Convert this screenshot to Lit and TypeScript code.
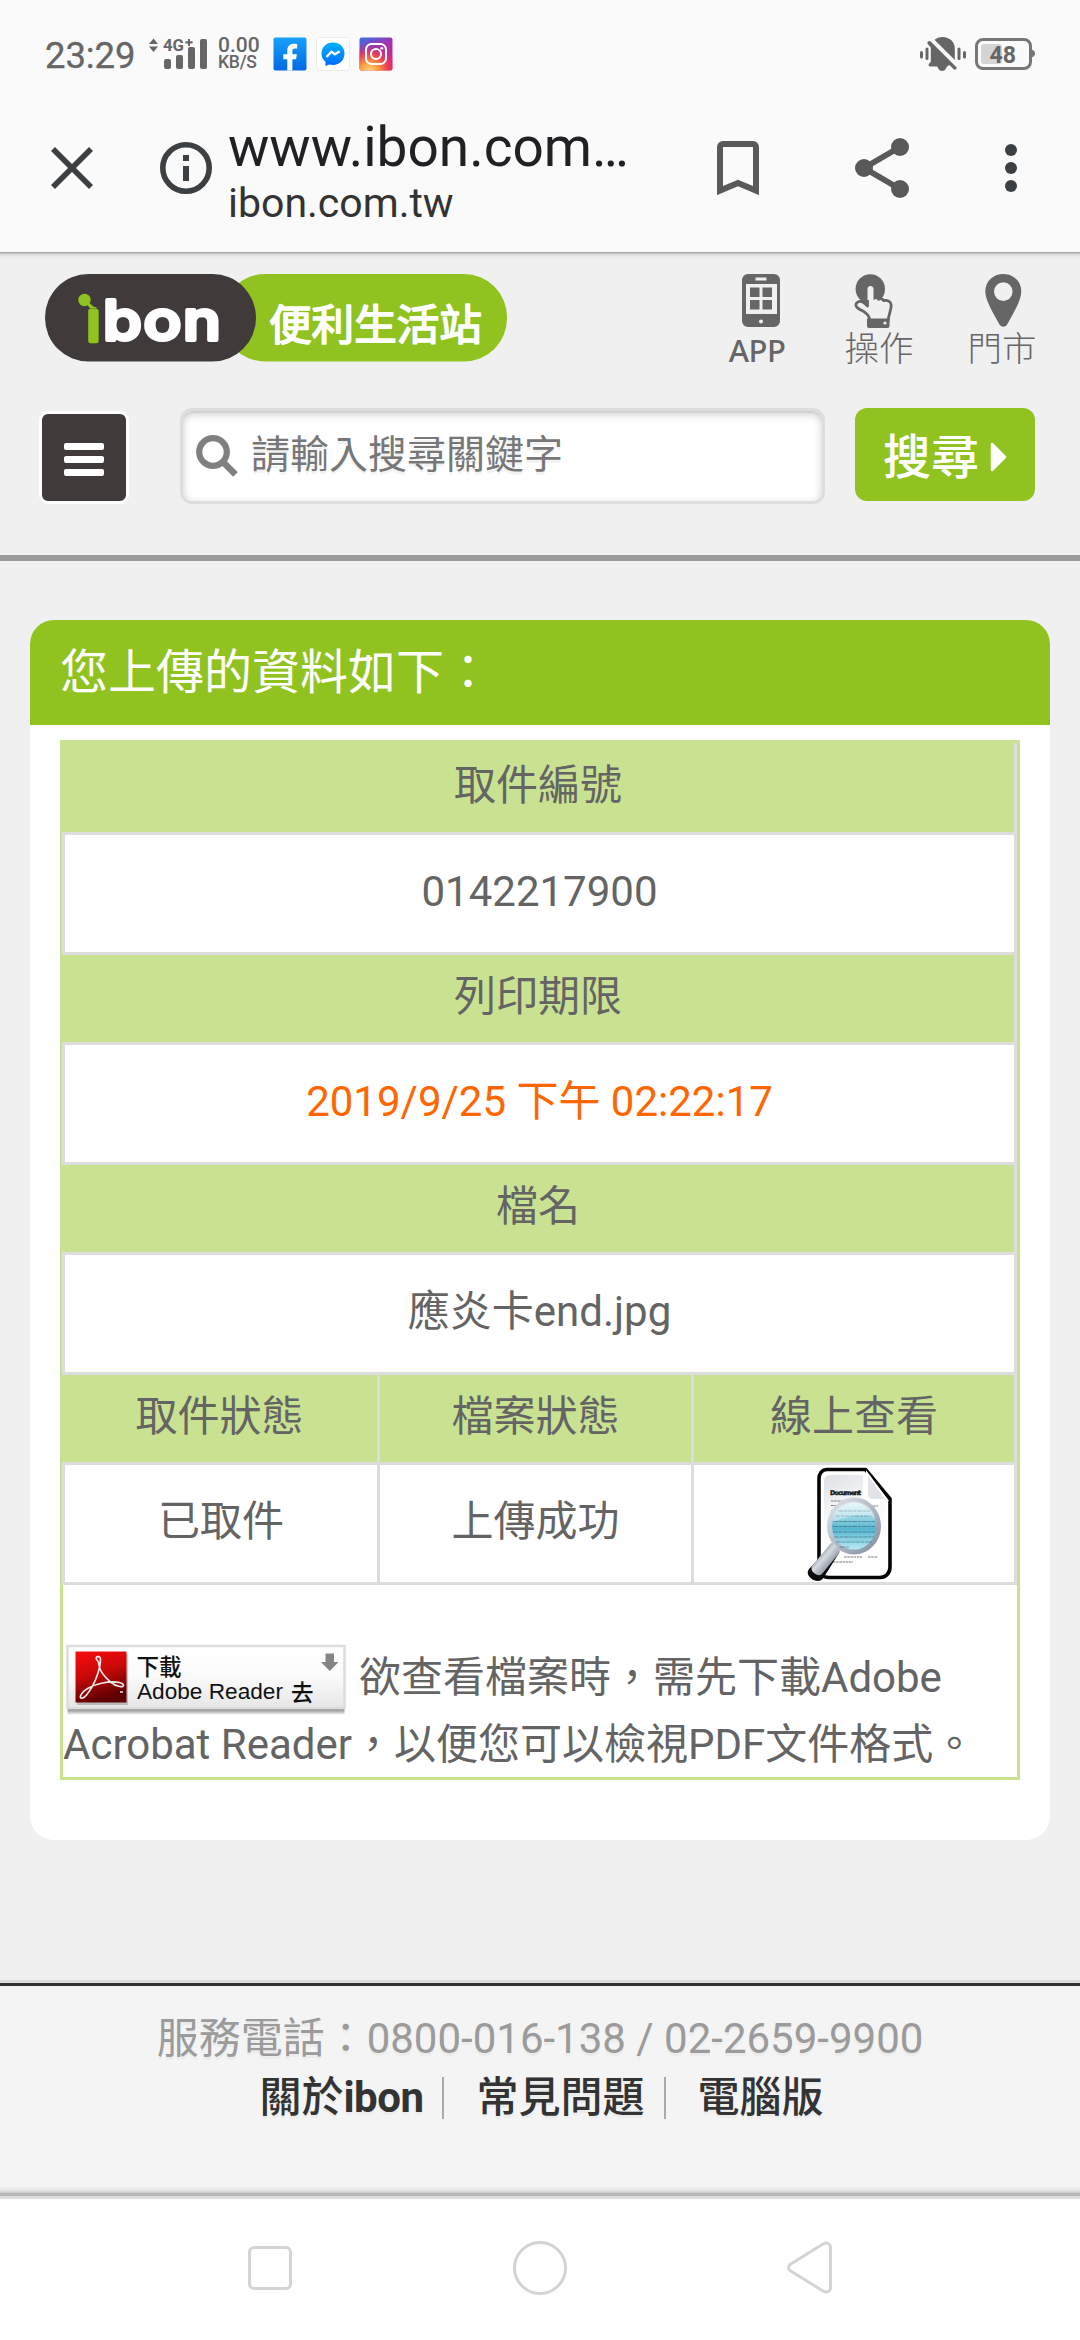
import { LitElement, html, css, svg } from "lit";
import { customElement, property } from "lit/decorators.js";

const fontStack = css`Roboto, "Noto Sans CJK TC", sans-serif`;

/* Android status bar */
@customElement("status-bar")
class StatusBar extends LitElement {
  static styles = css`
    :host { display: block; font-family: ${fontStack}; color: #666; }
    .bar { display: flex; align-items: center; height: 107px; padding: 0 45px 0 45px; }
    .time { font-size: 36.5px; line-height: 40px; padding-top: 4px; width: 102px; letter-spacing: -0.1px; -webkit-text-stroke: 0.3px #666; }
    .signal { width: 62px; height: 34px; margin-right: 9px; }
    .net { font-family: Roboto; }
    .rate { display: flex; flex-direction: column; width: 55px; font-weight: 500; }
    .num { font-size: 21px; line-height: 17px; }
    .unit { font-size: 17.5px; line-height: 17px; letter-spacing: -0.2px; }
    .app { width: 34px; height: 34px; margin-right: 9px; }
    .grow { flex: 1; }
    .bell { width: 48px; height: 36px; margin-right: 7px; }
    .battery { width: 61px; height: 34px; }
  `;
  render() {
    return html`<div class="bar">
      <span class="time">23:29</span>
      <svg class="signal" viewBox="147 37 62 34" fill="#666">
        <path d="M149 44l4.5-5.5 4.500 5.500zM149 46.500l4.500 5.500 4.500-5.500z" />
        <text class="net" x="163" y="51" font-size="16.500" font-weight="700" textLength="21" lengthAdjust="spacingAndGlyphs">4G</text>
        <path d="M188 39h2v2.200h2.600v2.200H190v2.600h-2v-2.600h-2.600v-2.200h2.600z" />
        <rect x="164" y="59" width="7" height="10" rx="2" />
        <rect x="176" y="55" width="7" height="14" rx="2" />
        <rect x="188" y="47" width="7" height="22" rx="2" />
        <rect x="200" y="39" width="7" height="30" rx="2" />
      </svg>
      <div class="rate"><span class="num">0.00</span><span class="unit">KB/S</span></div>
      <svg class="app" viewBox="0 0 34 34">
        <defs><linearGradient id="fb" x2="0" y2="1"><stop offset="0" stop-color="#18a0fb" /><stop offset="1" stop-color="#0468e4" /></linearGradient></defs>
        <rect x="0.500" y="0.500" width="33" height="33" rx="2" fill="url(#fb)" />
        <path d="M14.300 33.500V22.300h-4v-5h4v-3.600c0-4.600 2.500-6.900 6.600-6.900 1.400 0 2.400.1 3.300.3v4.300h-2.300c-2 0-2.500 1-2.500 2.600v3.300h4.500l-.8 5h-3.700v11.200z" fill="#fff" />
      </svg>
      <svg class="app" viewBox="0 0 34 34">
        <defs><linearGradient id="ms" x2="0" y2="1"><stop offset="0" stop-color="#00b2ff" /><stop offset="1" stop-color="#006aff" /></linearGradient></defs>
        <rect x="0.500" y="0.500" width="33" height="33" rx="3" fill="#fff" stroke="#ececec" />
        <path d="M17 5.500C10.300 5.500 5.500 10.300 5.500 16.500c0 3.400 1.300 6.200 4 8.200V29l3.800-1.500c1.200.3 2.400.5 3.700.5 6.700 0 11.500-5 11.500-11.500S23.700 5.500 17 5.500z" fill="url(#ms)" />
        <path d="M10.500 20l5-5.300 3.400 2.500 4.800-3" fill="none" stroke="#fff" stroke-width="2.400" stroke-linejoin="round" />
      </svg>
      <svg class="app" viewBox="0 0 34 34">
        <defs>
          <linearGradient id="ig" x1="0.200" x2="0.700" y2="1"><stop offset="0" stop-color="#4668d9" /><stop offset="0.350" stop-color="#9b35b4" /><stop offset="1" stop-color="#e0266d" /></linearGradient>
          <radialGradient id="igw" cx="0.300" cy="1.050" r="0.850"><stop offset="0" stop-color="#ffe08a" /><stop offset="0.350" stop-color="#fb9b3c" /><stop offset="0.700" stop-color="#ee3f52" stop-opacity="0.800" /><stop offset="1" stop-color="#d52b80" stop-opacity="0" /></radialGradient>
        </defs>
        <rect x="0.500" y="0.500" width="33" height="33" rx="2" fill="url(#ig)" />
        <rect x="0.500" y="0.500" width="33" height="33" rx="2" fill="url(#igw)" />
        <rect x="7" y="7" width="20" height="20" rx="5.500" fill="none" stroke="#fff" stroke-width="2" />
        <circle cx="17" cy="17" r="5" fill="none" stroke="#fff" stroke-width="2" />
        <circle cx="22.800" cy="11.300" r="1.400" fill="#fff" />
      </svg>
      <span class="grow"></span>
      <svg class="bell" viewBox="919 36 48 36" fill="#666">
        <rect x="920" y="51" width="3" height="7.500" rx="1.500" />
        <rect x="925.500" y="47.500" width="3" height="12.500" rx="1.500" />
        <rect x="957.500" y="47.500" width="3" height="12.500" rx="1.500" />
        <rect x="963" y="51" width="3" height="7.500" rx="1.500" />
        <path d="M934.500 39.800c2-1.700 5-2.800 8-2.800 7 0 12.300 5 12.300 11.500v11.400z" />
        <path d="M928 41.500l2.200-.5 26.200 26.200c.8 1.400-.8 3-2.400 2.200l-4.500-4.500c-1.500.6-2.300 1-3.200 2.800-1.600 4.400-6.800 4.400-8.400 0-.4-1-.7-1.200-1.500-1.200h-6c-2 0-2.500-2-.8-3.500l1.200-1V47.500l-3-3.500c-.6-1-.5-2 .2-2.500z" />
      </svg>
      <svg class="battery" viewBox="974 37 61 34">
        <rect x="981" y="44" width="21" height="20" rx="3" fill="#d4d4d4" />
        <rect x="976.500" y="39.500" width="54" height="29" rx="6.500" fill="none" stroke="#777" stroke-width="3" />
        <path d="M1031.500 49.500c2.800 1 3.500 2.300 3.500 4s-.7 3-3.500 4z" fill="#777" />
        <text class="net" x="989.500" y="63" font-size="23.500" font-weight="700" fill="#666" textLength="26.500" lengthAdjust="spacingAndGlyphs">48</text>
      </svg>
    </div>`;
  }
}

/* Browser toolbar with the page address */
@customElement("browser-toolbar")
class BrowserToolbar extends LitElement {
  static styles = css`
    :host { display: block; font-family: ${fontStack}; }
    .bar { display: flex; align-items: center; height: 121px; padding: 0 63px 0 51px; }
    .close { width: 42px; height: 42px; margin-right: 67px; }
    .info { width: 52px; height: 52px; margin-right: 16px; }
    .address { align-self: flex-start; width: 489px; margin-top: 10px; white-space: nowrap; }
    .url { font-size: 55px; line-height: 60px; color: #202124; }
    .host { font-size: 41px; line-height: 52px; color: #333; }
    .mark { width: 42px; height: 54px; margin-right: 96px; }
    .share { width: 54px; height: 60px; margin-right: 96px; }
    .dots { width: 12px; height: 48px; }
  `;
  render() {
    return html`<div class="bar">
      <svg class="close" viewBox="0 0 42 42"><path d="M2 2l38 38M40 2L2 40" stroke="#3c4043" stroke-width="5.600" /></svg>
      <svg class="info" viewBox="0 0 52 52">
        <circle cx="26" cy="26" r="23.200" fill="none" stroke="#3c4043" stroke-width="5.600" />
        <path d="M23 13h6v6h-6zM23 24h6v15h-6z" fill="#3c4043" />
      </svg>
      <div class="address"><div class="url">www.ibon.com…</div><div class="host">ibon.com.tw</div></div>
      <svg class="mark" viewBox="0 0 42 54"><path d="M3 49.600V6a3 3 0 0 1 3-3h30a3 3 0 0 1 3 3v43.600L21 42z" fill="none" stroke="#595959" stroke-width="6" /></svg>
      <svg class="share" viewBox="0 0 54 60" fill="#595959">
        <path d="M45 9L9 30l36 21" fill="none" stroke="#595959" stroke-width="5.800" />
        <circle cx="45" cy="9" r="9" /><circle cx="9" cy="30" r="9" /><circle cx="45" cy="51" r="9" />
      </svg>
      <svg class="dots" viewBox="0 0 12 48" fill="#3c4043"><circle cx="6" cy="6" r="6" /><circle cx="6" cy="24" r="6" /><circle cx="6" cy="42" r="6" /></svg>
    </div>`;
  }
}

/* Site header: logo, shortcuts and search */
@customElement("site-header")
class SiteHeader extends LitElement {
  static styles = css`
    :host { display: block; font-family: ${fontStack}; }
    .head { height: 309px; box-sizing: border-box; border-bottom: 6px solid #9b9b9b;
      background: linear-gradient(#a9a9a9 0 1px, #c4c4c4 1px 2px, #dcdcdc 2px 3px, #e8e8e8 4px, #f0f0f0 8px); }
    .top { display: flex; align-items: flex-start; height: 156px; box-sizing: border-box; padding: 22px 43px 0 45px; }
    .logo { width: 463px; height: 88px; margin-right: 221px; }
    .brand { font-family: Inter, Roboto, sans-serif; font-weight: 500; }
    .station { font-family: "Noto Sans CJK TC", sans-serif; font-weight: 400; }
    .stem { clip-path: inset(32% 0 0 0); }
    .link { display: flex; flex-direction: column; align-items: center; color: #666; font-size: 34.500px; line-height: 43px; font-weight: 300; white-space: nowrap; }
    .link svg { display: block; height: 54px; }
    .app { width: 56px; margin-right: 59px; font-family: "Noto Sans", sans-serif; font-size: 31px; font-weight: 500; line-height: 44px; letter-spacing: -0.500px; }
    .use { width: 70px; margin-right: 53px; }
    .shop { width: 70px; }
    .row { display: flex; align-items: flex-start; padding: 0 45px 0 39px; }
    .menu { display: flex; flex-direction: column; justify-content: center; gap: 6px; width: 90px; height: 93px; box-sizing: border-box;
      margin: 3px 51px 0 0; padding: 4px 22px 0; background: #403a3a; border: 3px solid #fff; border-radius: 9px; }
    .line { height: 7px; border-radius: 2px; background: #fff; }
    .field { display: flex; align-items: center; width: 645px; height: 96px; box-sizing: border-box; margin-right: 30px; padding: 0 0 0 13px;
      background: #fff; border: 3px solid #ddd; border-radius: 12px; box-shadow: inset 0 3px 9px #ccc, inset 0 2px 0 #ddd; }
    .lens { width: 42px; height: 42px; margin-right: 13px; }
    .hint { font-size: 39px; line-height: 50px; color: #777; padding-bottom: 3px; text-shadow: 0 3px 0 #f3f3f3; }
    .go { display: flex; align-items: center; width: 180px; height: 93px; box-sizing: border-box; padding: 0 0 0 28px; border-radius: 12px;
      background: #90c320; color: #fff; font-size: 48px; line-height: 60px; font-weight: 500; }
    .word { padding-top: 7px; }
    .arrow { width: 17px; height: 30px; margin: 9px 0 0 11px; padding-bottom: 4px; }
  `;
  render() {
    return html`<div class="head">
      <div class="top">
        <svg class="logo" viewBox="45 274 463 88">
          <rect x="222" y="274" width="285" height="87.500" rx="43" fill="#90c320" />
          <rect x="45" y="274" width="211" height="87.500" rx="43.500" fill="#403a3a" />
          <circle cx="84.500" cy="300" r="6.200" fill="#90c320" />
          <path d="M86 303l4 5.500 6 0-8-6.500z" fill="#90c320" />
          <text class="brand" transform="scale(1.140 1)" x="90.400 126 160.600" y="340.500" font-size="55" fill="#fff" stroke="#fff" stroke-width="4" stroke-linejoin="round">bon</text>
          <text class="brand stem" x="86.500" y="340.500" font-size="55" fill="#90c320" stroke="#90c320" stroke-width="4.500" stroke-linejoin="round">i</text>
          <text class="station" x="269" y="339.500" font-size="42.600" fill="#fff" stroke="#fff" stroke-width="1.700" stroke-linejoin="round">便利生活站</text>
        </svg>
        <div class="link app">
          <svg viewBox="0 0 56 54" fill="#666">
            <path fill-rule="evenodd" d="M19 0h26a6 6 0 0 1 6 6v41a6 6 0 0 1-6 6H19a6 6 0 0 1-6-6V6a6 6 0 0 1 6-6zM26.500 3.500v3h11v-3zM17 10v30h31V10zM30 47.500a2 2 0 1 0 4 0 2 2 0 1 0-4 0z" />
            <path d="M21 13.500h9.500V23H21zM33.500 13.500H43V23h-9.500zM21 26h9.500v9.500H21zM33.500 26H43v9.500h-9.500z" />
          </svg>
          <span>APP</span>
        </div>
        <div class="link use">
          <svg viewBox="0 0 70 54">
            <circle cx="26.300" cy="15" r="14.700" fill="#666" />
            <path d="M23.500 29V15c0-4 6-4 6 0v9.500c2-1.300 4-1 5 .8 2-1.200 4.300-.5 5 1.300 4-1 7.500 1 7.700 4.500.2 5-2.700 9-3 15.500H26c-.8-5-4-8-8-10-3-1.500-5.500-3-6-5-.5-3 3-5 6-3.800 2 .7 3.500 2.200 5.500 4.200z" fill="#f0f0f0" stroke="#666" stroke-width="2.800" stroke-linejoin="round" />
            <path d="M23.500 26V15c0-4 6-4 6 0v11z" fill="#f0f0f0" />
            <path d="M23 44.500h22.500V52a2 2 0 0 1-2 2H25a2 2 0 0 1-2-2z" fill="#666" />
            <circle cx="41" cy="49" r="1.600" fill="#f0f0f0" />
          </svg>
          <span>操作</span>
        </div>
        <div class="link shop">
          <svg viewBox="0 0 70 54"><path fill-rule="evenodd" d="M36.300 0C26 0 18.300 7.500 18.300 17.500c0 9 8 21.500 14.200 33 2 3 5.600 3 7.600 0 6.200-11.500 14.200-24 14.200-33C54.300 7.500 46.600 0 36.300 0zm0 8.300a9.300 9.300 0 1 1 0 18.600 9.300 9.300 0 0 1 0-18.600z" fill="#666" /></svg>
          <span>門市</span>
        </div>
      </div>
      <div class="row">
        <div class="menu"><div class="line"></div><div class="line"></div><div class="line"></div></div>
        <div class="field">
          <svg class="lens" viewBox="0 0 42 42" fill="none" stroke="#808080"><circle cx="17" cy="17" r="13.800" stroke-width="6.200" /><path d="M26.500 26.500L39.500 39.500" stroke-width="6.500" /></svg>
          <span class="hint">請輸入搜尋關鍵字</span>
        </div>
        <div class="go"><span class="word">搜尋</span>
          <svg class="arrow" viewBox="0 0 17 30"><path d="M2 2v26L15 15z" fill="#fff" stroke="#fff" stroke-width="2.500" stroke-linejoin="round" /></svg>
        </div>
      </div>
    </div>`;
  }
}

/* Paper sheet under a magnifying glass */
const documentIcon = svg`
  <defs>
    <linearGradient id="paper" x2="0.300" y2="1"><stop offset="0" stop-color="#dcdfe4" /><stop offset="0.450" stop-color="#fafafb" /><stop offset="1" stop-color="#fff" /></linearGradient>
    <linearGradient id="glass" x2="0" y2="1"><stop offset="0" stop-color="#e8f8fb" /><stop offset="0.300" stop-color="#a3dbe8" /><stop offset="0.550" stop-color="#55b4ce" /><stop offset="1" stop-color="#c5f2f8" /></linearGradient>
    <linearGradient id="rim" x2="1" y2="1"><stop offset="0" stop-color="#dfe4ea" /><stop offset="1" stop-color="#8290a2" /></linearGradient>
    <linearGradient id="grip" x2="1" y2="1"><stop offset="0.200" stop-color="#6c7684" /><stop offset="0.450" stop-color="#d5dbe2" /><stop offset="0.850" stop-color="#59636f" /></linearGradient>
  </defs>
  <path d="M21 4.500h38.500L84 34v68c0 6-4 10.500-10 10.500H23c-6 0-10-4-10-10V14c0-5.500 3-9.500 8-9.500z" fill="#fff" stroke="#050505" stroke-width="3.600" stroke-linejoin="round" />
  <path d="M24 10h33v22c0 5 3 7 7 7h15v60c0 5-3 8-8 8H26c-5 0-8-3-8-8V17c0-4 2-7 6-7z" fill="url(#paper)" />
  <path d="M61 8l20 27H67c-4 0-6-2-6-6z" fill="#e1e3e8" stroke="#fff" stroke-width="2" />
  <text class="tiny" x="24" y="30" font-size="6.400" font-weight="700" fill="#111" stroke="#111" stroke-width="0.400" textLength="31">Document</text>
  <path d="M25 36h12M25 40.500h10M64 41h8M25 46h6M62 92h10M38 92h18M27 97h20" stroke="#777" stroke-width="1" stroke-dasharray="2.500 0.700" />
  <ellipse cx="48" cy="61" rx="24.500" ry="26" fill="url(#glass)" stroke="url(#rim)" stroke-width="5" />
  <path d="M32 46h32M29 51h38M27 56.500h42M27 61.500h42M27 67h42M28 72h40M30 77h36M34 82h10" stroke="#2f5f70" stroke-opacity="0.550" stroke-width="1.200" stroke-dasharray="5 0.800 3 0.800" />
  <path d="M27 53c4-22 38-22 42 0-12-5-28-2-42 4z" fill="#fff" fill-opacity="0.350" />
  <path d="M26.500 79L3 104c-4 5 2 12 9 12 2 0 4-1 6-4l15-24z" fill="#0a0a0a" />
  <path d="M25 78c3 0 8 4 9 9L16 109c-4 4-13-3-10-8z" fill="url(#grip)" />
`;

/* Label and value cells of the upload record */
@customElement("upload-row")
class UploadRow extends LitElement {
  @property({ type: Array }) labels: string[] = [];
  @property({ type: Array }) values: string[] = [];
  @property({ type: Boolean }) accent = false;
  @property({ type: Boolean }) first = false;
  static styles = css`
    :host { display: block; font-family: ${fontStack}; font-size: 42px; line-height: 60px; color: #646464; }
    .grid { display: grid; grid-template-columns: 955px; }
    .three { grid-template-columns: 318px 314px 323px; }
    .cell { display: flex; align-items: center; justify-content: center; box-sizing: border-box; border-right: 3px solid #ddd; border-bottom: 3px solid #ddd; padding-bottom: 4px; }
    .label { height: 90px; background: #c9e292; }
    .tall { height: 92px; }
    .value { height: 120px; background: #fff; }
    .value:first-child { border-left: 3px solid #ddd; }
    .hot { color: #ff6600; }
    .pic { padding-bottom: 0; }
    .doc { display: block; width: 96px; height: 117px; }
    .tiny { font-family: "DejaVu Sans", sans-serif; }
  `;
  render() {
    const cols = this.labels.length === 3 ? "grid three" : "grid";
    return html`
      <div class=${cols}>${this.labels.map((t) => html`<div class="cell label ${this.first ? "tall" : ""}">${t}</div>`)}</div>
      <div class=${cols}>${this.values.map((t) =>
        t
          ? html`<div class="cell value ${this.accent ? "hot" : ""}">${t}</div>`
          : html`<div class="cell value pic"><svg class="doc" viewBox="0 0 96 117">${documentIcon}</svg></div>`
      )}</div>`;
  }
}

/* Button that leads to the reader download */
@customElement("reader-badge")
class ReaderBadge extends LitElement {
  static styles = css`
    :host { display: block; width: 284px; height: 68px; }
    svg { display: block; overflow: visible; }
    .zh { font-family: "Noto Sans CJK TC", sans-serif; font-weight: 500; }
    .en { font-family: "Liberation Sans", sans-serif; }
  `;
  render() {
    return html`<svg width="284" height="70" viewBox="0 0 284 70">
      <defs>
        <linearGradient id="face" x2="0" y2="1"><stop offset="0" stop-color="#fff" /><stop offset="0.500" stop-color="#fafafa" /><stop offset="1" stop-color="#e6e6e6" /></linearGradient>
        <linearGradient id="red" x2="0.300" y2="1"><stop offset="0" stop-color="#fb0d0d" /><stop offset="0.500" stop-color="#c90808" /><stop offset="1" stop-color="#5e0000" /></linearGradient>
        <linearGradient id="edge" x2="0" y2="1"><stop offset="0" stop-color="#777" /><stop offset="0.500" stop-color="#aaa" /><stop offset="1" stop-color="#fff" /></linearGradient>
      </defs>
      <rect x="3.500" y="62" width="277" height="8" fill="url(#edge)" />
      <rect x="3.500" y="1" width="277" height="62" fill="url(#face)" stroke="#ddd" stroke-width="2.500" />
      <rect x="13" y="9" width="51" height="51" fill="#000" opacity="0.200" />
      <rect x="11.500" y="6.500" width="51" height="51" fill="url(#red)" />
      <path d="M33 15c-3-3.500 3.500-5 3.500-1 0 9-5 25-14 36-3 4-7 4-6 1 2-6 12-11 22-13 10-2 20-1 21 2 1 3-7 2-13-3-7-6-11-12-11.500-17-.3-3-1-4-2-5zM56 47l3 0" fill="none" stroke="#fff" stroke-width="1.700" stroke-opacity="0.900" />
      <text class="zh" x="72.500" y="30" font-size="22.500" fill="#111">下載</text>
      <text class="en" x="73" y="54" font-size="21.500" fill="#111" textLength="146" lengthAdjust="spacingAndGlyphs">Adobe Reader</text>
      <text class="zh" x="227" y="55.500" font-size="22.500" fill="#111">去</text>
      <path d="M261.500 8.500h8.500v8.500h4.500l-8.700 9-8.800-9h4.500z" fill="#858585" />
    </svg>`;
  }
}

@customElement("app-root")
class AppRoot extends LitElement {
  static styles = css`
    :host { display: block; width: 1080px; height: 2340px; overflow: hidden; background: #f0f0f0; font-family: ${fontStack}; }
    .chrome { height: 252px; background: #fafafa; }
    .main { height: 1419px; box-sizing: border-box; padding: 59px 30px 0; }
    .card { height: 1220px; border-radius: 24px; background: #fff; overflow: hidden; }
    .title { height: 105px; box-sizing: border-box; padding: 0 0 0 30px; background: #90c320; color: #fff; font-size: 48px; line-height: 105px; }
    .record { margin: 15px 30px 0; height: 1040px; box-sizing: border-box; border: 3px solid #c9e292; }
    .rows { margin: 0 0 0 -1px; width: 955px; }
    .note { margin-top: 60px; color: #646464; font-size: 42px; white-space: nowrap; }
    .first { display: flex; height: 68px; line-height: 65px; }
    .first reader-badge { margin: 0 11px 0 1px; }
    .second { line-height: 64px; }
    .foot { height: 216px; box-sizing: border-box; padding-top: 23px; border-top: 3px solid #ddd; text-align: center; font-size: 42px;
      background: linear-gradient(#333 0 3px, #f4f4f4 3px 203px, #e8e8e8 207px, #c8c8c8 210px, #b7b7b7 210px 213px); text-shadow: 0 3px 0 #ececec; }
    .phone { color: #9b9b9b; line-height: 66px; }
    .links { display: flex; justify-content: center; align-items: center; color: #333; line-height: 52px; font-weight: 700; padding-left: 3px; }
    .zh { font-weight: 500; }
    .name { letter-spacing: -0.5px; }
    .sep { width: 2px; height: 42px; background: #aaa; margin: 0 32px 0 19px; }
    .nav { display: flex; align-items: center; justify-content: space-between; height: 144px; box-sizing: border-box; border-top: 3px solid #dedede; background: #fff; padding: 0 240px 3px; }
    .nav svg { display: block; width: 60px; height: 60px; fill: none; stroke: #d4d4d4; stroke-width: 3; }
  `;
  render() {
    return html`
      <div class="chrome">
        <status-bar></status-bar>
        <browser-toolbar></browser-toolbar>
      </div>
      <site-header></site-header>
      <div class="main">
        <div class="card">
          <div class="title">您上傳的資料如下：</div>
          <div class="record">
            <div class="rows">
              <upload-row first .labels=${["取件編號"]} .values=${["0142217900"]}></upload-row>
              <upload-row accent .labels=${["列印期限"]} .values=${["2019/9/25 下午 02:22:17"]}></upload-row>
              <upload-row .labels=${["檔名"]} .values=${["應炎卡end.jpg"]}></upload-row>
              <upload-row .labels=${["取件狀態", "檔案狀態", "線上查看"]} .values=${["已取件", "上傳成功", ""]}></upload-row>
            </div>
            <div class="note">
              <div class="first"><reader-badge></reader-badge><span>欲查看檔案時，需先下載Adobe</span></div>
              <div class="second">Acrobat Reader，以便您可以檢視PDF文件格式。</div>
            </div>
          </div>
        </div>
      </div>
      <div class="foot">
        <div class="phone">服務電話：0800-016-138 / 02-2659-9900</div>
        <div class="links">
          <span><span class="zh">關於</span><span class="name">ibon</span></span><span class="sep"></span><span class="zh">常見問題</span><span class="sep"></span><span class="zh">電腦版</span>
        </div>
      </div>
      <div class="nav">
        <svg viewBox="240 2238 60 60"><rect x="249.500" y="2247.500" width="41" height="41" rx="4.500" /></svg>
        <svg viewBox="510 2238 60 60"><circle cx="540" cy="2268" r="25.500" /></svg>
        <svg viewBox="780 2238 60 60"><path d="M790 2264.500l33-20.500c4-2 7.500-.5 7.500 3.500v40c0 4-3.500 5.500-7.500 3.500l-33-20.500c-2-1.700-2-4.500 0-6z" /></svg>
      </div>
    `;
  }
}
